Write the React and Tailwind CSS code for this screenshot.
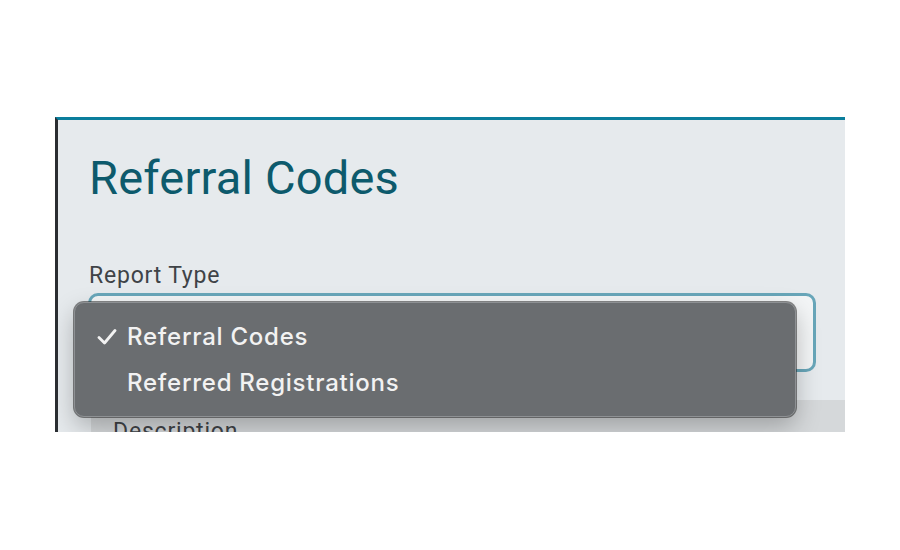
export default function App() {
  return (
    <div className="w-[900px] h-[550px] bg-white overflow-hidden" style={{ fontFamily: "Roboto, 'Liberation Sans', sans-serif" }}>
      <div className="ml-[55px] mt-[117px] w-[790px] h-[315px] border-l-[3px] border-l-[#2a2d31] border-t-[3px] border-t-[#0b7e9c] bg-[#e6eaed] relative overflow-hidden">
        <div className="pl-[31px] pt-[30px]">
          <h1 className="text-[47px] leading-[56px] text-[#0d5a6c] font-normal tracking-[0.2px]">Referral Codes</h1>
          <div className="mt-[58px] text-[23px] leading-[24px] text-[#3f4347] tracking-[0.8px]">Report Type</div>
          <div className="mt-[5px] ml-[-1px] w-[728px] h-[79px] rounded-[10px] border-[3px] border-[#68a6b9] bg-[#f3f5f6]"></div>
        </div>
        <div className="mt-[28px] ml-[33px] h-[40px] bg-[#d5d8da] pl-[22px] pt-[20px] text-[23px] leading-[24px] text-[#3f4347] tracking-[0.8px]">Description</div>
        <div
          className="absolute left-[16px] top-[182px] w-[722px] h-[115px] rounded-[10px] bg-[#6a6d70] border border-[#8e9194] shadow-[0_0_0_1px_rgba(40,40,40,0.55),0_10px_24px_rgba(0,0,0,0.25)] pt-[19px]"
          style={{ fontFamily: "Inter, 'Open Sans', sans-serif" }}
        >
          <div className="flex items-center h-[30px] text-[24px] font-[450] text-[#f2f2f2] tracking-[0.75px]">
            <svg width="20" height="16" viewBox="0 0 20 16" className="ml-[22px] mr-[10px]">
              <path d="M2 8.5 L7.5 14 L18 1.5" fill="none" stroke="#f2f2f2" strokeWidth="2.8" strokeLinecap="round" strokeLinejoin="round" />
            </svg>
            <span>Referral Codes</span>
          </div>
          <div className="flex items-center h-[30px] mt-[16px] pl-[52px] text-[24px] font-[450] text-[#f2f2f2] tracking-[0.75px]">
            Referred Registrations
          </div>
        </div>
      </div>
    </div>
  );
}
